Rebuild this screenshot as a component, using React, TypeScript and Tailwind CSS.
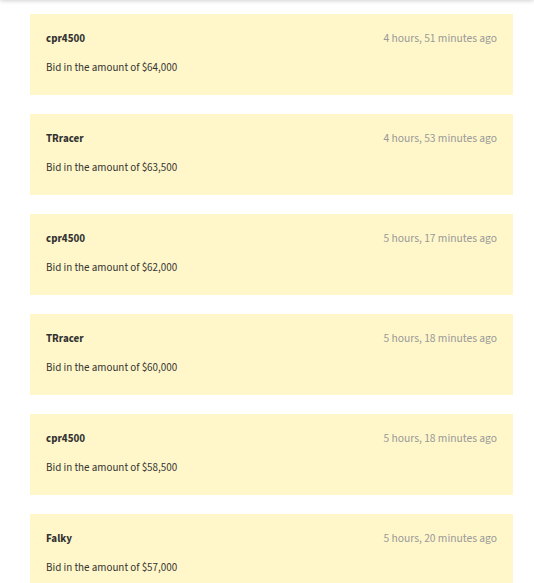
import React from "react";

const bids = [
  { user: "cpr4500", time: "4 hours, 51 minutes ago", amount: "$64,000" },
  { user: "TRracer", time: "4 hours, 53 minutes ago", amount: "$63,500" },
  { user: "cpr4500", time: "5 hours, 17 minutes ago", amount: "$62,000" },
  { user: "TRracer", time: "5 hours, 18 minutes ago", amount: "$60,000" },
  { user: "cpr4500", time: "5 hours, 18 minutes ago", amount: "$58,500" },
  { user: "Falky", time: "5 hours, 20 minutes ago", amount: "$57,000" },
];

export default function App() {
  return (
    <div className="relative h-[583px] overflow-hidden bg-white" style={{ fontFamily: '"Source Sans 3", "Roboto Condensed", sans-serif' }}>
      <div className="absolute left-0 right-0 -top-2 h-2 shadow-[0_1px_4px_rgba(0,0,0,0.18)]" />
      <div className="flex flex-col gap-[19px] pl-[30px] pr-[21px] pt-[14px]">
        {bids.map((b, i) => (
          <div key={i} className="h-[81px] shrink-0 bg-[#fff7c9] px-4 pt-[17px]">
            <div className="flex items-center justify-between h-4 leading-4">
              <span className="text-[11px] font-bold text-[#333]">{b.user}</span>
              <span className="text-[11.5px] text-[#999]">{b.time}</span>
            </div>
            <div className="mt-[13px] h-4 leading-4 text-[11px] text-[#333]">Bid in the amount of {b.amount}</div>
          </div>
        ))}
      </div>
    </div>
  );
}
